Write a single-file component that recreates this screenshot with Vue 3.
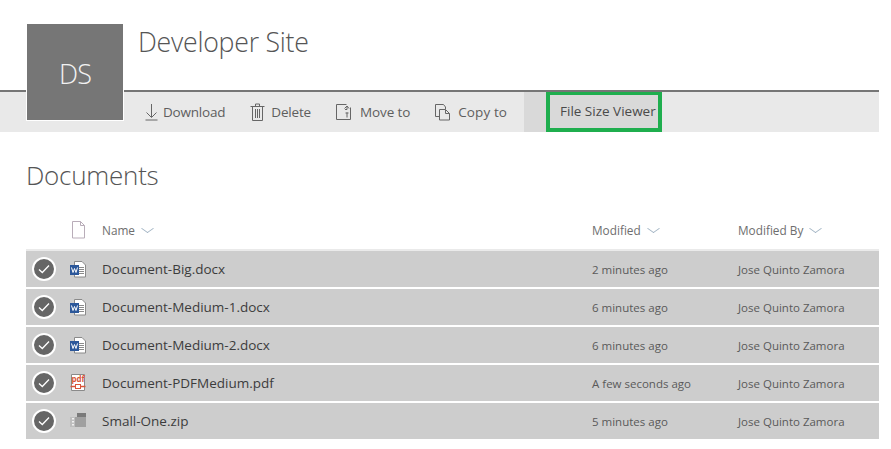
<script setup>
const commands = [
  { label: "Download", icon: "download" },
  { label: "Delete", icon: "delete" },
  { label: "Move to", icon: "move" },
  { label: "Copy to", icon: "copy" },
];

const files = [
  { name: "Document-Big.docx", type: "word", modified: "2 minutes ago" },
  { name: "Document-Medium-1.docx", type: "word", modified: "6 minutes ago" },
  { name: "Document-Medium-2.docx", type: "word", modified: "6 minutes ago" },
  { name: "Document-PDFMedium.pdf", type: "pdf", modified: "A few seconds ago" },
  { name: "Small-One.zip", type: "zip", modified: "5 minutes ago" },
];
</script>

<template>
  <div class="page">
    <header class="site-header">
      <div class="site-logo">DS</div>
      <h1 class="site-title">Developer Site</h1>
    </header>

    <nav class="command-bar">
      <div class="commands">
        <a v-for="cmd in commands" :key="cmd.label" class="command" :class="'cmd-' + cmd.icon">
          <svg class="cmd-icon" width="16" height="18" viewBox="0 0 16 18" fill="none" stroke="#666" stroke-width="1">
            <template v-if="cmd.icon === 'download'">
              <path d="M7.500 1v13M2.500 9.500l5 5 5-5M1.500 17h12" />
            </template>
            <template v-else-if="cmd.icon === 'delete'">
              <path d="M.5 3.500h14M5.500 3.500v-2.500h4v2.500M2.500 3.500v14h10v-14M5.500 6v9M7.500 6v9M9.500 6v9" />
            </template>
            <template v-else-if="cmd.icon === 'move'">
              <path d="M10.500 1.500H.5v15h14V4.500M8.500 5.500 11 3l2 2.500M11 3v3.500H9M11 9.500v5M9.500 10h3" />
            </template>
            <template v-else>
              <path d="M8.500 1.500H.5v12h4M8.500 1.500l2 2.500v2M4.500 6.500h6l4 4v6.500h-10zM10.500 6.500v4h4" />
            </template>
          </svg>
          <span>{{ cmd.label }}</span>
        </a>
      </div>
      <div class="command-group">
        <a class="viewer-button">File Size Viewer</a>
      </div>
    </nav>

    <main class="library">
      <h2 class="library-title">Documents</h2>

      <div class="list-head row-grid">
        <span></span>
        <svg width="16" height="18" viewBox="0 0 16 18" fill="none" stroke="#b9adb9">
          <path d="M2.500 .5h8l4 4v12.500h-12zM10.500 .5v4h4" />
        </svg>
        <span class="col-title">Name <i class="chev"></i></span>
        <span class="col-title">Modified <i class="chev"></i></span>
        <span class="col-title">Modified By <i class="chev"></i></span>
      </div>

      <div v-for="file in files" :key="file.name" class="file-row row-grid">
        <span class="check">
          <svg width="12" height="10" viewBox="0 0 12 10" fill="none" stroke="#fff" stroke-width="1.300">
            <path d="M1 5.500 4.300 8.500 11 1.500" />
          </svg>
        </span>

        <svg v-if="file.type === 'word'" class="file-icon" width="18" height="18" viewBox="0 0 18 18">
          <path d="M5.500 1.500h7.500l3.500 3.500v12h-11z" fill="#fff" stroke="#8a8a8a" />
          <path d="M10 7.500h5M10 9.500h5M10 11.500h5M10 13.500h5" stroke="#8a8a8a" />
          <rect x="1" y="5" width="9" height="10" fill="#2b579a" />
          <path d="M2.500 7.500 4 12.500l1.500-4 1.500 4 1.500-5" fill="none" stroke="#fff" />
        </svg>
        <svg v-else-if="file.type === 'pdf'" class="file-icon" width="18" height="18" viewBox="0 0 18 18">
          <path d="M2.500 .5h13v16h-13z" fill="#fff" stroke="#8a8a8a" />
          <text x="9" y="8" text-anchor="middle" class="pdf-label">pdf</text>
          <path d="M1.500 12.500h15" stroke="#d9553a" stroke-width="1.500" />
          <rect x="6.500" y="10.500" width="5" height="4" fill="#fff" stroke="#d9553a" />
        </svg>
        <svg v-else class="file-icon" width="18" height="18" viewBox="0 0 18 18">
          <path d="M8 1h9v4H8z" fill="#7a7a7a" />
          <path d="M1 5h16v10H1z" fill="#a0a0a0" />
          <path d="M1 5h5v10H1z" fill="#bdbdbd" />
          <path d="M3 6h2v1.500H3zM3 9h2v1.500H3zM3 12h2v1.500H3z" fill="#f0f0f0" />
        </svg>

        <span class="file-name">{{ file.name }}</span>
        <span class="file-meta">{{ file.modified }}</span>
        <span class="file-meta">Jose Quinto Zamora</span>
      </div>
    </main>
  </div>
</template>

<style>
html,
body {
  margin: 0;
  background: #fff;
}
</style>

<style scoped>
.page {
  width: 879px;
  height: 449px;
  overflow: hidden;
  font-family: "Open Sans", "Noto Sans", sans-serif;
  color: #333;
}

.site-header {
  height: 90px;
  padding-left: 138px;
  border-bottom: 2px solid #767676;
  position: relative;
}

.site-logo {
  position: absolute;
  left: 26px;
  top: 23px;
  width: 96px;
  height: 96px;
  border: 1px solid #fff;
  background: #767676;
  color: #f2f2f2;
  font-size: 27px;
  font-weight: 300;
  line-height: 100px;
  text-align: center;
  letter-spacing: -1px;
}

.site-title {
  margin: 0;
  padding-top: 24px;
  font-size: 26.700px;
  line-height: 36px;
  font-weight: 300;
  color: #555;
  letter-spacing: -0.25px;
}

.command-bar {
  display: flex;
  height: 40px;
  background: #e9e9e9;
  padding-left: 144px;
}

.commands {
  display: flex;
  align-items: center;
  gap: 25px;
  width: 380px;
  padding-bottom: 1px;
  box-sizing: border-box;
}

.command {
  display: flex;
  align-items: center;
  font-size: 13.500px;
  color: #5e5e5e;
  letter-spacing: -0.2px;
}

.cmd-download {
  gap: 3px;
}

.cmd-delete {
  gap: 5px;
}

.cmd-move {
  gap: 8px;
  letter-spacing: -0.1px;
}

.cmd-copy {
  gap: 7px;
  letter-spacing: 0.1px;
}

.command-group {
  background: #d9d9d9;
  padding-left: 22px;
  width: 116px;
  display: flex;
}

.viewer-button {
  width: 116px;
  height: 40px;
  box-sizing: border-box;
  border: 4px solid #1fae4e;
  border-top-width: 3px;
  font-size: 13.500px;
  line-height: 33px;
  padding-left: 10px;
  white-space: nowrap;
  color: #4a4a4a;
}

.library {
  padding-left: 26px;
}

.library-title {
  margin: 0;
  padding-top: 25px;
  font-size: 26px;
  line-height: 36px;
  font-weight: 300;
  color: #555;
  letter-spacing: -0.25px;
}

.row-grid {
  display: grid;
  grid-template-columns: 44px 32px 490px 146px 1fr;
  align-items: center;
}

.list-head {
  margin-top: 18px;
  height: 40px;
  border-bottom: 2px solid #eaeaea;
  box-sizing: border-box;
}

.col-title {
  font-size: 11.800px;
  color: #6e6e6e;
  display: flex;
  align-items: center;
  gap: 5px;
}

.chev {
  width: 8px;
  height: 8px;
  border-right: 1px solid #9fb2c2;
  border-bottom: 1px solid #9fb2c2;
  transform: scaleY(0.7) rotate(45deg);
  margin: -4px 0 0 3px;
}

.file-row {
  height: 36px;
  margin-bottom: 2px;
  background: #cdcdcd;
}

.check {
  width: 20px;
  height: 20px;
  margin-left: 6px;
  border: 2px solid #fff;
  border-radius: 50%;
  background: #666;
  display: flex;
  align-items: center;
  justify-content: center;
}

.file-icon {
  margin-left: -1px;
}

.pdf-label {
  font-size: 8px;
  font-weight: 700;
  fill: #d9553a;
}

.file-name {
  font-size: 13.500px;
  color: #3c3c3c;
}

.file-meta {
  font-size: 11.500px;
  color: #5a5a5a;
}
</style>
